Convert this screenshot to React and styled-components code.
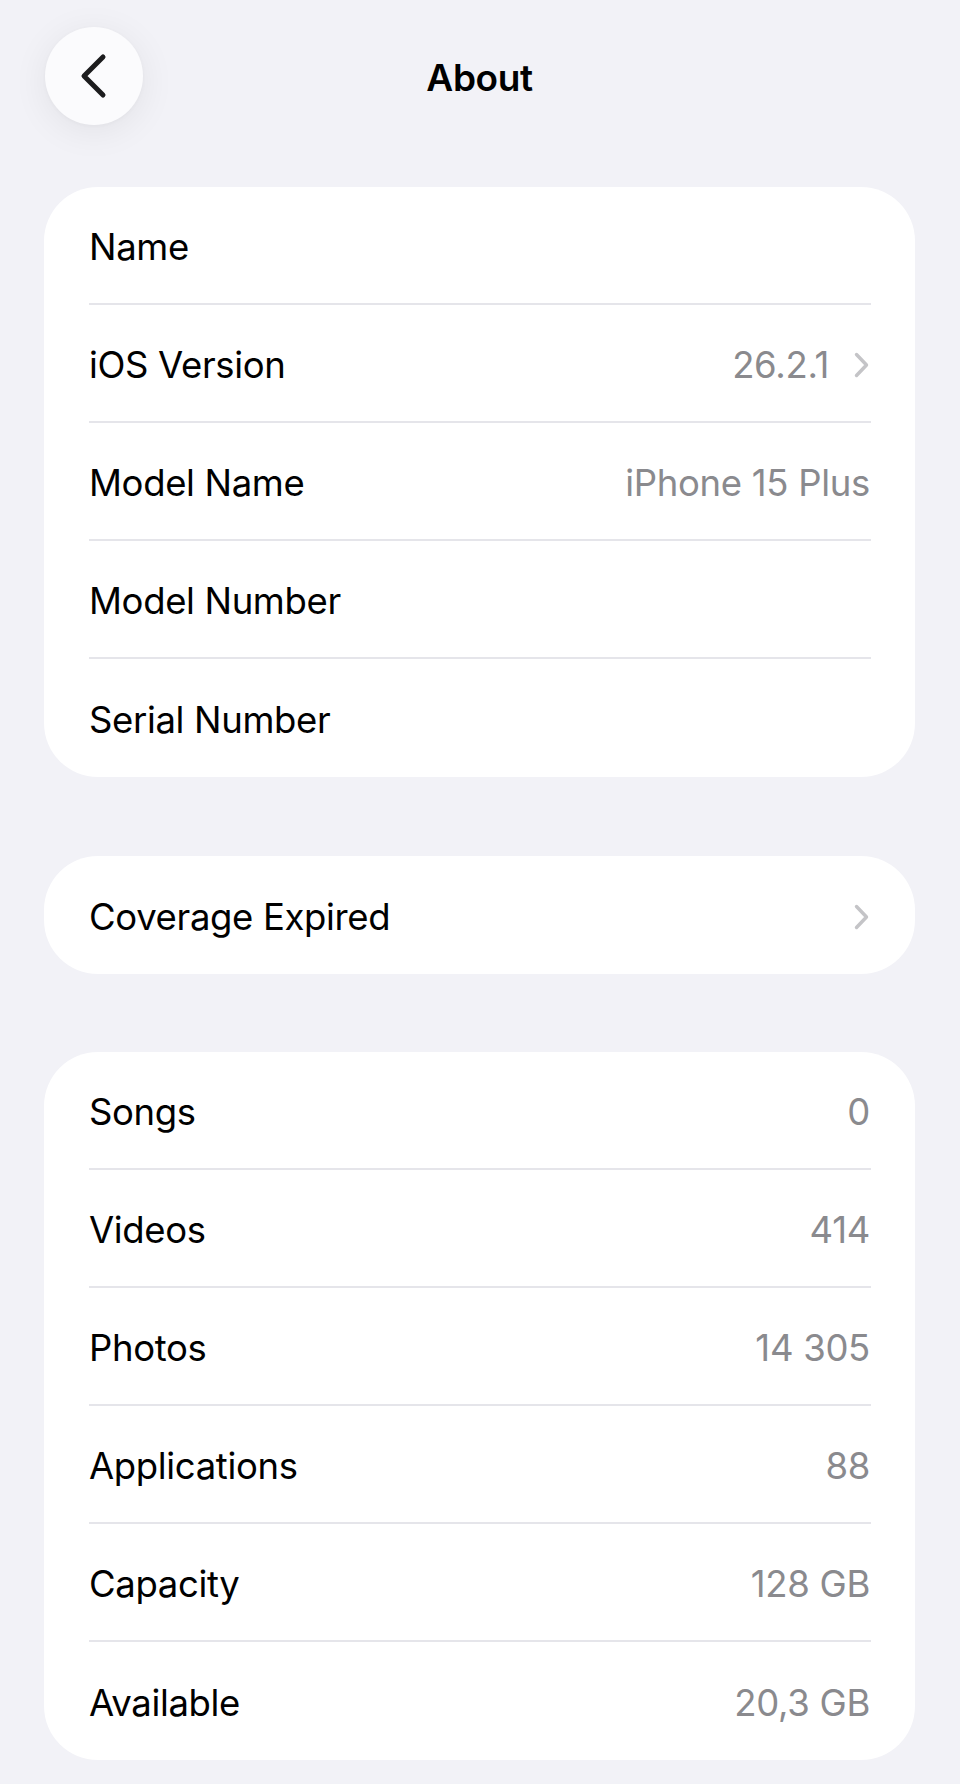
import React from "react";
import styled, { createGlobalStyle } from "styled-components";

const GlobalStyle = createGlobalStyle`
  html, body {
    margin: 0;
    padding: 0;
    background: #f2f2f7;
  }
  body {
    font-family: Inter, "Noto Sans", "Liberation Sans", sans-serif;
    -webkit-font-smoothing: antialiased;
  }
  * { box-sizing: border-box; }
`;

const Page = styled.div`
  min-height: 1784px;
  background: #f2f2f7;
  padding: 27px 45px 0 44px;
  display: flex;
  flex-direction: column;
`;

const Header = styled.header`
  display: grid;
  grid-template-columns: 98px 1fr 98px;
  align-items: center;
  height: 98px;
  margin-bottom: 62px;
`;

const BackButton = styled.button`
  width: 98px;
  height: 98px;
  border-radius: 50%;
  border: none;
  padding: 0;
  background: #fbfbfd;
  box-shadow: 0 6px 36px rgba(0, 0, 0, 0.07), 0 1px 4px rgba(0, 0, 0, 0.03);
  display: flex;
  align-items: center;
  justify-content: center;
  margin-left: 1px;
`;

const Title = styled.h1`
  margin: 0;
  padding-top: 2px;
  text-align: center;
  font-size: 37px;
  font-weight: 600;
  color: #000;
  letter-spacing: -0.4px;
`;

const Card = styled.section`
  background: #fff;
  border-radius: 54px;
  overflow: hidden;
  margin-bottom: ${(p) => p.$gap || 0}px;
`;

const Row = styled.div`
  padding-left: 45px;
  height: 118px;
`;

const RowInner = styled.div`
  height: 100%;
  display: flex;
  align-items: center;
  justify-content: space-between;
  padding-top: 4px;
  padding-right: ${(p) => (p.$last ? 45 : 1)}px;
  margin-right: ${(p) => (p.$last ? 0 : 44)}px;
  border-bottom: ${(p) => (p.$last ? "none" : "2px solid #e5e5ea")};
`;

const Label = styled.span`
  font-size: 36.5px;
  font-weight: 400;
  color: #000;
  letter-spacing: -0.35px;
`;

const Right = styled.span`
  display: flex;
  align-items: center;
  gap: 24px;
`;

const Value = styled.span`
  font-size: 36.5px;
  font-weight: 400;
  color: #8a8a8e;
  letter-spacing: -0.3px;
`;

const Chevron = () => (
  <svg width="17" height="26" viewBox="0 0 17 26" fill="none">
    <path
      d="M3.5 2.5 L13.5 13 L3.5 23.5"
      stroke="#c4c4c7"
      strokeWidth="3.4"
      strokeLinecap="round"
      strokeLinejoin="round"
    />
  </svg>
);

const BackChevron = () => (
  <svg width="30" height="46" viewBox="0 0 30 46" fill="none">
    <path
      d="M24 4 L5 23 L24 42"
      stroke="#1c1c1e"
      strokeWidth="5"
      strokeLinecap="round"
      strokeLinejoin="round"
    />
  </svg>
);

function SettingsRow({ label, value, chevron, last }) {
  return (
    <Row>
      <RowInner $last={last}>
        <Label>{label}</Label>
        <Right>
          {value !== undefined && <Value>{value}</Value>}
          {chevron && <Chevron />}
        </Right>
      </RowInner>
    </Row>
  );
}

const deviceRows = [
  { label: "Name", value: "" },
  { label: "iOS Version", value: "26.2.1", chevron: true },
  { label: "Model Name", value: "iPhone 15 Plus" },
  { label: "Model Number", value: "" },
  { label: "Serial Number", value: "" },
];

const statsRows = [
  { label: "Songs", value: "0" },
  { label: "Videos", value: "414" },
  { label: "Photos", value: "14 305" },
  { label: "Applications", value: "88" },
  { label: "Capacity", value: "128 GB" },
  { label: "Available", value: "20,3 GB" },
];

export default function App() {
  return (
    <>
      <GlobalStyle />
      <Page>
        <Header>
          <BackButton aria-label="Back">
            <BackChevron />
          </BackButton>
          <Title>About</Title>
          <span />
        </Header>

        <Card $gap={79}>
          {deviceRows.map((r, i) => (
            <SettingsRow key={r.label} {...r} last={i === deviceRows.length - 1} />
          ))}
        </Card>

        <Card $gap={78}>
          <SettingsRow label="Coverage Expired" chevron last />
        </Card>

        <Card>
          {statsRows.map((r, i) => (
            <SettingsRow key={r.label} {...r} last={i === statsRows.length - 1} />
          ))}
        </Card>
      </Page>
    </>
  );
}
